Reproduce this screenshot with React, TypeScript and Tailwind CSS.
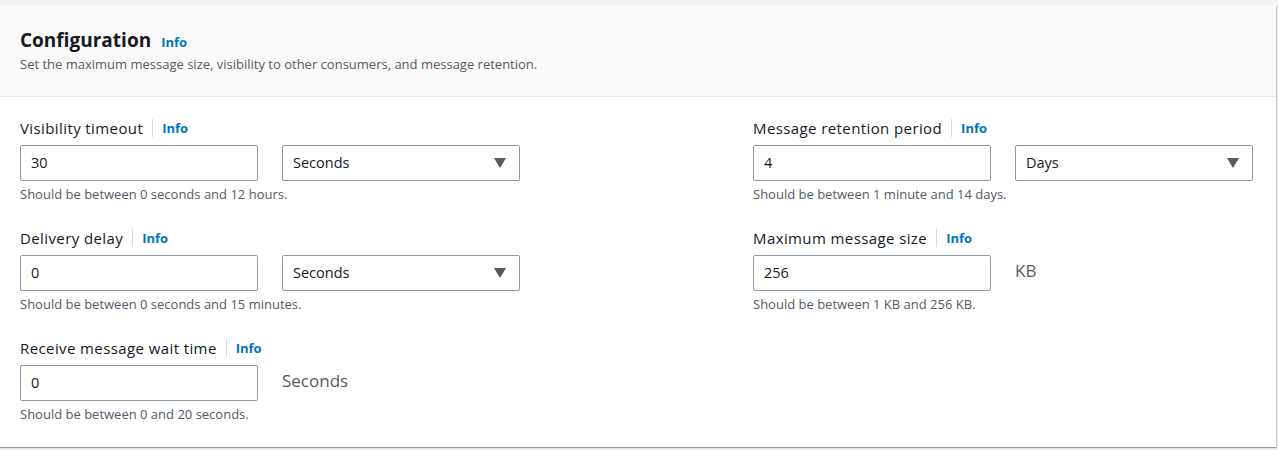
import React from "react";

const font = { fontFamily: '"Open Sans", "Liberation Sans", sans-serif' };

const Info = () => (
  <span className="text-[13px] font-bold text-[#0073bb] leading-[22px]">Info</span>
);

const Label = ({ text }: { text: string }) => (
  <div className="flex items-center h-[22px]">
    <span className="text-[15px] tracking-[0.4px] text-[#16191f] leading-[22px]">{text}</span>
    <span className="mx-[9px] h-[18px] w-px bg-[#d5dbdb]" />
    <Info />
  </div>
);

const TextInput = ({ value }: { value: string }) => (
  <div className="w-[238px] h-[36px] border border-[#8d99a8] rounded-[2px] bg-white flex items-center px-[10px] text-[14.5px] text-[#16191f]">
    {value}
  </div>
);

const Select = ({ value }: { value: string }) => (
  <div className="w-[238px] h-[36px] border border-[#8d99a8] rounded-[2px] bg-white flex items-center justify-between pl-[10px] pr-[13px] text-[14.5px] text-[#16191f]">
    <span>{value}</span>
    <svg width="12" height="10" viewBox="0 0 12 10">
      <path d="M0 0 H12 L6 10 Z" fill="#545b64" />
    </svg>
  </div>
);

const Unit = ({ text }: { text: string }) => (
  <div className="h-[36px] flex items-start pt-[3px] text-[17px] text-[#545b64]">{text}</div>
);

type FieldProps = {
  label: string;
  value: string;
  select?: string;
  unit?: string;
  hint: string;
};

const Field = ({ label, value, select, unit, hint }: FieldProps) => (
  <div className="flex flex-col">
    <Label text={label} />
    <div className="flex gap-[24px] mt-[6px]">
      <TextInput value={value} />
      {select && <Select value={select} />}
      {unit && <Unit text={unit} />}
    </div>
    <div className="mt-[5px] text-[13px] leading-[16px] text-[#545b64]">{hint}</div>
  </div>
);

export default function App() {
  return (
    <div className="w-[1278px] h-[450px] bg-[#f2f3f3] pt-[5px]" style={font}>
      <div className="w-[1276px] bg-white shadow-[0_1px_1px_0_rgba(0,28,36,0.3),1px_1px_1px_0_rgba(0,28,36,0.15)]">
        {/* header */}
        <div className="bg-[#fafafa] border-b border-[#eaeded] px-[20px] pt-[22px] pb-[24px]">
          <div className="flex items-baseline gap-[10px]">
            <h2 className="text-[19px] font-bold text-[#16191f] leading-[26px]">Configuration</h2>
            <Info />
          </div>
          <p className="text-[13px] leading-[16px] text-[#545b64] mt-[3px]">
            Set the maximum message size, visibility to other consumers, and message retention.
          </p>
        </div>

        {/* body */}
        <div className="grid grid-cols-[733px_1fr] px-[20px] pt-[20px] pb-[25px]">
          <div className="flex flex-col gap-[25px]">
            <Field
              label="Visibility timeout"
              value="30"
              select="Seconds"
              hint="Should be between 0 seconds and 12 hours."
            />
            <Field
              label="Delivery delay"
              value="0"
              select="Seconds"
              hint="Should be between 0 seconds and 15 minutes."
            />
            <Field
              label="Receive message wait time"
              value="0"
              unit="Seconds"
              hint="Should be between 0 and 20 seconds."
            />
          </div>
          <div className="flex flex-col gap-[25px]">
            <Field
              label="Message retention period"
              value="4"
              select="Days"
              hint="Should be between 1 minute and 14 days."
            />
            <Field
              label="Maximum message size"
              value="256"
              unit="KB"
              hint="Should be between 1 KB and 256 KB."
            />
          </div>
        </div>
      </div>
    </div>
  );
}
